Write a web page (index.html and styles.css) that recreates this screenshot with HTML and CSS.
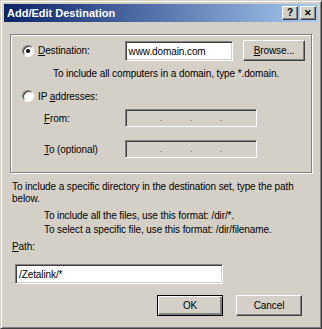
FILE: index.html
```html
<!DOCTYPE html>
<html lang="en">
<head>
    <meta charset="UTF-8">
    <title>Add/Edit Destination</title>
    <link rel="stylesheet" href="styles.css">
</head>
<body>
    <div class="window">
        <!-- Title bar -->
        <div class="titlebar">
            <span class="title">Add/Edit Destination</span>
            <div class="title-buttons">
                <span class="cap-btn">?</span>
                <span class="cap-btn close">&#x2715;</span>
            </div>
        </div>

        <!-- Destination group -->
        <div class="group">
            <div class="row">
                <label class="radio-label">
                    <span class="radio checked"></span>
                    <span><u>D</u>estination:</span>
                </label>
                <div class="field field-domain">www.domain.com</div>
                <button class="btn browse"><u>B</u>rowse...</button>
            </div>
            <p class="hint">To include all computers in a domain, type *.domain.</p>
            <div class="row row-ip">
                <label class="radio-label">
                    <span class="radio"></span>
                    <span>IP <u>a</u>ddresses:</span>
                </label>
            </div>
            <div class="row row-sub">
                <span class="sub-label"><u>F</u>rom:</span>
                <div class="field field-ip"><i>.</i><i>.</i><i>.</i></div>
            </div>
            <div class="row row-sub">
                <span class="sub-label"><u>T</u>o (optional)</span>
                <div class="field field-ip"><i>.</i><i>.</i><i>.</i></div>
            </div>
        </div>

        <!-- Path section -->
        <div class="path-section">
            <p class="info">To include a specific directory in the destination set, type the path below.</p>
            <p class="format">To include all the files, use this format: /dir/*.<br>To select a specific file, use this format: /dir/filename.</p>
            <p class="path-label"><u>P</u>ath:</p>
            <div class="field field-path">/Zetalink/*</div>
        </div>

        <div class="actions">
            <button class="btn default">OK</button>
            <button class="btn">Cancel</button>
        </div>
    </div>
</body>
</html>
```

FILE: styles.css
```css
/* Global */
body {
    margin: 0;
    background-color: #d4d0c8;
    font-family: 'Liberation Sans', Arial, sans-serif;
    font-size: 10px;
    letter-spacing: -0.1px;
    color: #000;
}

p {
    margin: 0;
}

u {
    text-decoration: underline;
}

/* Window frame */
.window {
    width: 322px;
    height: 329px;
    box-sizing: border-box;
    background-color: #d4d0c8;
    border: 1px solid;
    border-color: #d4d0c8 #404040 #404040 #d4d0c8;
    box-shadow: inset 1px 1px 0 #fff, inset -1px -1px 0 #808080;
    padding: 3px;
}

.titlebar {
    height: 18px;
    display: flex;
    align-items: center;
    justify-content: space-between;
    padding: 0 2px 0 3px;
    background: linear-gradient(to right, #0a246a, #a6caf0);
}

.title {
    color: #fff;
    font-weight: bold;
    font-size: 11px;
    letter-spacing: 0;
}

.title-buttons {
    display: flex;
    gap: 2px;
}

.cap-btn {
    width: 14px;
    height: 12px;
    display: flex;
    align-items: center;
    justify-content: center;
    background-color: #d4d0c8;
    border: 1px solid;
    border-color: #fff #404040 #404040 #fff;
    box-shadow: inset -1px -1px 0 #808080;
    font-weight: bold;
    font-size: 10px;
    line-height: 1;
}

.cap-btn.close {
    font-size: 9px;
}

/* Group box */
.group {
    margin: 12px 6px 0 6px;
    height: 139px;
    box-sizing: border-box;
    border: 1px solid #808080;
    box-shadow: 1px 1px 0 #fff, inset 1px 1px 0 #fff;
    padding: 5px 6px 0 11px;
}

.row {
    display: flex;
    align-items: center;
}

.radio-label {
    width: 103px;
    display: flex;
    align-items: center;
    gap: 4px;
}

.radio {
    width: 12px;
    height: 12px;
    box-sizing: border-box;
    border-radius: 50%;
    background-color: #fff;
    border: 1px solid;
    border-color: #808080 #fff #fff #808080;
    box-shadow: inset 1px 1px 0 #404040;
    position: relative;
}

.radio.checked::after {
    content: '';
    position: absolute;
    left: 3px;
    top: 3px;
    width: 4px;
    height: 4px;
    border-radius: 50%;
    background-color: #000;
}

/* Edit fields */
.field {
    height: 20px;
    box-sizing: border-box;
    background-color: #fff;
    border: 1px solid;
    border-color: #808080 #fff #fff #808080;
    box-shadow: inset 1px 1px 0 #404040, inset -1px -1px 0 #d4d0c8;
    padding: 4px 3px;
    white-space: nowrap;
}

.field-domain {
    width: 109px;
}

.field-ip {
    width: 132px;
    height: 18px;
    background-color: #d4d0c8;
    display: flex;
    justify-content: space-around;
    padding: 2px 20px 0;
    color: #808080;
}

.field-ip i {
    font-style: normal;
}

/* Buttons */
.btn {
    height: 21px;
    box-sizing: border-box;
    font-family: inherit;
    font-size: 10px;
    letter-spacing: -0.1px;
    color: #000;
    background-color: #d4d0c8;
    border: 1px solid;
    border-color: #fff #404040 #404040 #fff;
    box-shadow: inset -1px -1px 0 #808080;
    padding: 0;
}

.browse {
    width: 62px;
    margin-left: 10px;
}

.btn.default {
    border: 1px solid #000;
    box-shadow: inset 1px 1px 0 #fff, inset -2px -2px 0 #808080, inset -1px -1px 0 #404040;
}

/* Text rows */
.hint {
    margin: 7px 0 0 31px;
}

.row-ip {
    margin-top: 11px;
}

.row-sub {
    margin-top: 13px;
    padding-left: 22px;
}

.row-ip + .row-sub {
    margin-top: 7px;
}

.sub-label {
    width: 81px;
}

.path-section {
    padding: 8px 0 0 8px;
}

.info {
    width: 300px;
    line-height: 12px;
}

.format {
    margin: 4px 0 0 32px;
    line-height: 14px;
}

.path-label {
    margin-top: 4px;
}

.field-path {
    width: 208px;
    margin: 12px 0 0 3px;
}

.actions {
    display: flex;
    gap: 13px;
    padding: 11px 0 0 153px;
}

.actions .btn {
    width: 66px;
}
```
